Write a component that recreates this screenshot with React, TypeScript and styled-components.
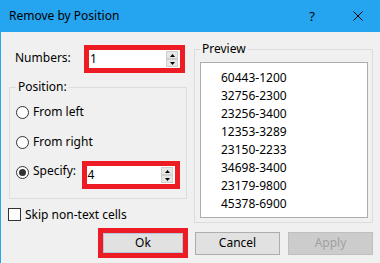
import styled, { createGlobalStyle } from "styled-components";

const GlobalStyle = createGlobalStyle`
  html, body {
    margin: 0;
    padding: 0;
    background: #f0f0f0;
    overflow: hidden;
  }
  * {
    box-sizing: border-box;
  }
`;

const previewItems = [
  "60443-1200",
  "32756-2300",
  "23256-3400",
  "12353-3289",
  "23150-2233",
  "34698-3400",
  "23179-9800",
  "45378-6900",
];

const Window = styled.div`
  width: 380px;
  height: 263px;
  background: #f0f0f0;
  border-left: 1px solid #25a4f0;
  display: flex;
  flex-direction: column;
  font-family: "Noto Sans", "Open Sans", sans-serif;
  font-size: 12px;
  color: #000;
`;

const TitleBar = styled.div`
  height: 32px;
  flex: none;
  background: #25a4f0;
  display: flex;
  align-items: center;
  padding-left: 8px;
`;

const Title = styled.div`
  flex: 1;
  font-size: 12px;
  line-height: 16px;
`;

const HelpGlyph = styled.div`
  width: 14px;
  text-align: right;
  font-size: 13px;
  line-height: 16px;
  margin-right: 38px;
`;

const CloseIcon = styled.svg`
  width: 10px;
  height: 10px;
  margin-right: 17px;
`;

const Body = styled.div`
  padding: 0 7px;
`;

const Columns = styled.div`
  display: grid;
  grid-template-columns: 180px 179px;
  column-gap: 6px;
  height: 191px;
`;

const LeftCol = styled.div`
  display: flex;
  flex-direction: column;
`;

const NumbersRow = styled.div`
  display: flex;
  align-items: center;
  height: 28px;
  margin-top: 13px;
`;

const FieldLabel = styled.div<{ $width: number; $indent?: number }>`
  width: ${(p) => p.$width}px;
  padding-left: ${(p) => p.$indent ?? 0}px;
  margin-top: -3px;
  line-height: 16px;
`;

const Highlight = styled.div<{ $width: number; $height: number; $shift?: number }>`
  width: ${(p) => p.$width}px;
  height: ${(p) => p.$height}px;
  border: 5px solid #ed1c24;
  margin-top: ${(p) => p.$shift ?? 0}px;
  display: flex;
`;

const SpinInput = styled.div`
  flex: 1;
  background: #fff;
  display: flex;
  align-items: center;
  padding-left: 1px;
`;

const SpinValue = styled.div`
  flex: 1;
  line-height: 16px;
`;

const SpinButtons = styled.div`
  width: 12px;
  height: 16px;
  margin-right: 2px;
  display: flex;
  flex-direction: column;
`;

const SpinButton = styled.div`
  flex: 1;
  background: #e6e6e6;
  border: 1px solid #cfcfcf;
  display: flex;
  align-items: center;
  justify-content: center;
`;

const Group = styled.fieldset<{ $inset?: string; $pad: string }>`
  margin: ${(p) => p.$inset ?? "0"};
  border: 1px solid #dcdcdc;
  padding: ${(p) => p.$pad};
  min-width: 0;
`;

const Legend = styled.legend`
  padding: 0 2px;
  font-size: 12px;
  line-height: 16px;
`;

const RadioRow = styled.div`
  display: flex;
  align-items: center;
  height: 30px;
`;

const RadioCircle = styled.div<{ $checked?: boolean }>`
  width: 13px;
  height: 13px;
  border-radius: 50%;
  border: 1px solid #333;
  background: #fff;
  margin-right: 4px;
  display: flex;
  align-items: center;
  justify-content: center;
  flex: none;
  &::after {
    content: "";
    display: ${(p) => (p.$checked ? "block" : "none")};
    width: 7px;
    height: 7px;
    border-radius: 50%;
    background: #333;
  }
`;

const OptionText = styled.div`
  line-height: 16px;
`;

const CheckRow = styled.div`
  display: flex;
  align-items: center;
  height: 13px;
  margin-top: 9px;
`;

const CheckBox = styled.div`
  width: 13px;
  height: 13px;
  border: 1px solid #333;
  background: #fff;
  margin-right: 4px;
  flex: none;
`;

const ListBox = styled.div`
  height: 156px;
  background: #fff;
  border: 1px solid #acacac;
  padding: 6px 0 0 20px;
`;

const ListItem = styled.div`
  line-height: 18px;
  height: 18px;
`;

const ButtonRow = styled.div`
  display: flex;
  justify-content: flex-end;
  align-items: center;
  height: 30px;
  margin-top: 5px;
`;

const OkFrame = styled.div`
  width: 90px;
  height: 30px;
  border: 5px solid #ed1c24;
  margin-right: 7px;
  display: flex;
`;

const DialogButton = styled.div<{ $disabled?: boolean; $focused?: boolean; $gap?: number }>`
  width: ${(p) => (p.$focused ? "auto" : "85px")};
  flex: ${(p) => (p.$focused ? "1" : "none")};
  height: ${(p) => (p.$focused ? "auto" : "23px")};
  margin-right: ${(p) => p.$gap ?? 0}px;
  background: ${(p) => (p.$disabled ? "#cccccc" : "#e1e1e1")};
  border: 1px solid
    ${(p) => (p.$focused ? "#b4c6da" : p.$disabled ? "#bfbfbf" : "#adadad")};
  color: ${(p) => (p.$disabled ? "#a0a0a0" : "#000")};
  display: flex;
  align-items: center;
  justify-content: center;
  line-height: 16px;
`;

const Arrow = ({ up }: { up?: boolean }) => (
  <svg width="5" height="3" viewBox="0 0 5 3">
    <polygon points={up ? "2.5,0 5,3 0,3" : "0,0 5,0 2.5,3"} fill="#000" />
  </svg>
);

const Spinner = ({ value }: { value: string }) => (
  <SpinInput>
    <SpinValue>{value}</SpinValue>
    <SpinButtons>
      <SpinButton>
        <Arrow up />
      </SpinButton>
      <SpinButton>
        <Arrow />
      </SpinButton>
    </SpinButtons>
  </SpinInput>
);

export default function App() {
  return (
    <>
      <GlobalStyle />
      <Window>
        <TitleBar>
          <Title>Remove by Position</Title>
          <HelpGlyph>?</HelpGlyph>
          <CloseIcon viewBox="0 0 10 10">
            <path d="M0.5 0.5 L9.5 9.5 M9.5 0.5 L0.5 9.5" stroke="#000" strokeWidth="1" />
          </CloseIcon>
        </TitleBar>
        <Body>
          <Columns>
            <LeftCol>
              <NumbersRow>
                <FieldLabel $width={76} $indent={7}>
                  Numbers:
                </FieldLabel>
                <Highlight $width={101} $height={28}>
                  <Spinner value="1" />
                </Highlight>
              </NumbersRow>
              <Group $inset="6px 1px 0 1px" $pad="2px 6px 11px 6px">
                <Legend>Position:</Legend>
                <RadioRow>
                  <RadioCircle />
                  <OptionText>From left</OptionText>
                </RadioRow>
                <RadioRow>
                  <RadioCircle />
                  <OptionText>From right</OptionText>
                </RadioRow>
                <RadioRow>
                  <RadioCircle $checked />
                  <FieldLabel $width={50}>Specify:</FieldLabel>
                  <Highlight $width={101} $height={28} $shift={6}>
                    <Spinner value="4" />
                  </Highlight>
                </RadioRow>
              </Group>
              <CheckRow>
                <CheckBox />
                <OptionText>Skip non-text cells</OptionText>
              </CheckRow>
            </LeftCol>
            <Group $inset="9px 0 0 0" $pad="5px 4px 4px 5px">
              <Legend>Preview</Legend>
              <ListBox>
                {previewItems.map((item) => (
                  <ListItem key={item}>{item}</ListItem>
                ))}
              </ListBox>
            </Group>
          </Columns>
          <ButtonRow>
            <OkFrame>
              <DialogButton $focused>Ok</DialogButton>
            </OkFrame>
            <DialogButton $gap={8}>Cancel</DialogButton>
            <DialogButton $disabled>Apply</DialogButton>
          </ButtonRow>
        </Body>
      </Window>
    </>
  );
}
